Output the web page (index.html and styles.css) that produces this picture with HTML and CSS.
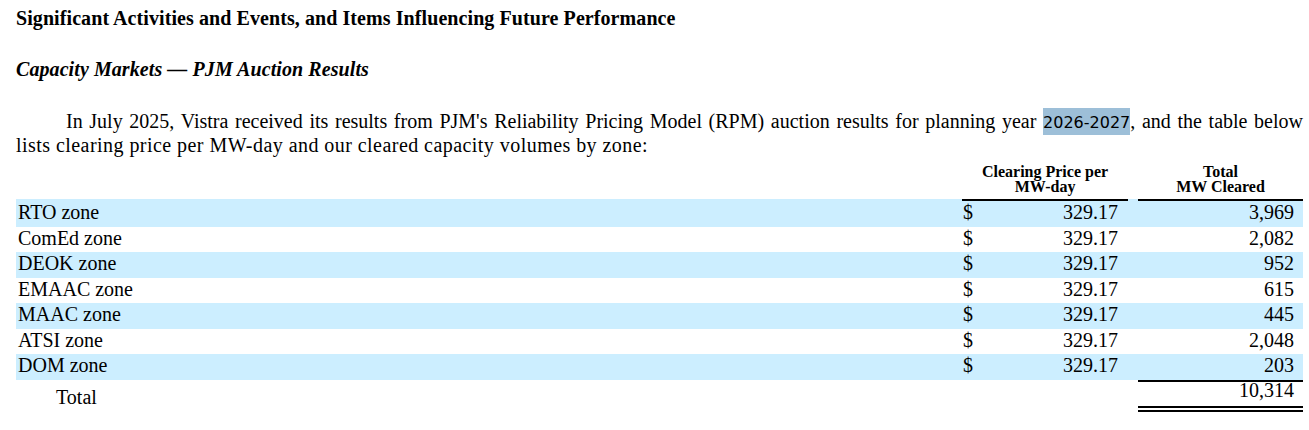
FILE: index.html
```html
<!DOCTYPE html>
<html lang="en">
<head>
<meta charset="utf-8">
<title>Capacity Markets</title>
<link rel="stylesheet" href="styles.css">
</head>
<body>
<div class="page">
  <h2 class="section-title">Significant Activities and Events, and Items Influencing Future Performance</h2>
  <h3 class="sub-title">Capacity Markets — PJM Auction Results</h3>
  <p class="lead">In July 2025, Vistra received its results from PJM's Reliability Pricing Model (RPM) auction results for planning year <span class="hit">2026-2027</span>, and the table below <span class="tail">lists clearing price per MW-day and our cleared capacity volumes by zone:</span></p>
  <table class="zones">
    <colgroup>
      <col class="c-label">
      <col class="c-dollar">
      <col class="c-price">
      <col class="c-gap">
      <col class="c-mw">
    </colgroup>
    <thead>
      <tr>
        <th></th>
        <th class="head" colspan="2">Clearing Price per<br>MW-day</th>
        <th></th>
        <th class="head">Total<br>MW Cleared</th>
      </tr>
    </thead>
    <tbody>
      <tr class="band first"><td class="label">RTO zone</td><td class="dollar rule">$</td><td class="num price rule">329.17</td><td></td><td class="num mw rule">3,969</td></tr>
      <tr><td class="label">ComEd zone</td><td class="dollar">$</td><td class="num price">329.17</td><td></td><td class="num mw">2,082</td></tr>
      <tr class="band"><td class="label">DEOK zone</td><td class="dollar">$</td><td class="num price">329.17</td><td></td><td class="num mw">952</td></tr>
      <tr><td class="label">EMAAC zone</td><td class="dollar">$</td><td class="num price">329.17</td><td></td><td class="num mw">615</td></tr>
      <tr class="band"><td class="label">MAAC zone</td><td class="dollar">$</td><td class="num price">329.17</td><td></td><td class="num mw">445</td></tr>
      <tr><td class="label">ATSI zone</td><td class="dollar">$</td><td class="num price">329.17</td><td></td><td class="num mw">2,048</td></tr>
      <tr class="band"><td class="label">DOM zone</td><td class="dollar">$</td><td class="num price">329.17</td><td></td><td class="num mw">203</td></tr>
      <tr class="total"><td class="label total-label">Total</td><td></td><td></td><td></td><td class="num mw total-mw">10,314</td></tr>
    </tbody>
  </table>
</div>
</body>
</html>
```
FILE: styles.css
```css
html, body {
  margin: 0;
  padding: 0;
  background: #fff;
}

body {
  font-family: "Liberation Serif", "Times New Roman", serif;
  font-size: 20px;
  line-height: 22px;
  color: #000;
}

.page {
  padding: 7px 6px 0 16px;
}

.section-title {
  margin: 0;
  font-size: 20px;
  font-weight: bold;
  line-height: 22px;
  letter-spacing: 0.08px;
}

.sub-title {
  margin: 29px 0 0;
  font-size: 20px;
  font-weight: bold;
  font-style: italic;
  line-height: 22px;
  letter-spacing: 0.08px;
}

.lead {
  margin: 30px 0 0;
  text-align: justify;
  text-indent: 50px;
}

.tail {
  letter-spacing: 0.45px;
}

.hit {
  font-family: "DejaVu Sans", sans-serif;
  font-size: 16px;
  background: #9dbfd8;
  padding: 5px 0 3px;
}

.zones {
  margin-top: 8px;
  width: 1287px;
  table-layout: fixed;
  border-collapse: separate;
  border-spacing: 0;
}

.c-label { width: 946px; }
.c-dollar { width: 24px; }
.c-price { width: 142px; }
.c-gap { width: 10px; }
.c-mw { width: 165px; }

.zones th {
  padding: 0 0 5px;
  vertical-align: bottom;
}

.head {
  font-size: 16px;
  font-weight: bold;
  line-height: 15px;
  text-align: center;
}

.zones td {
  padding: 1px 0 3px;
  line-height: 21.5px;
  white-space: nowrap;
}

.band td {
  background: #cceeff;
}

.first td {
  border-top: 2px solid transparent;
}

.first td.rule {
  border-top-color: #000;
}

.label {
  padding-left: 2px !important;
}

.dollar {
  padding-left: 1px !important;
}

.num {
  text-align: right;
}

.price {
  padding-right: 10px !important;
}

.mw {
  padding-right: 9px !important;
}

.total td {
  vertical-align: top;
}

.total-label {
  padding-left: 40px !important;
  padding-top: 7px !important;
}

.total-mw {
  line-height: 16px !important;
  padding-top: 0 !important;
  padding-bottom: 8px !important;
  border-top: 2px solid #000;
  border-bottom: 6px double #000;
}
```
